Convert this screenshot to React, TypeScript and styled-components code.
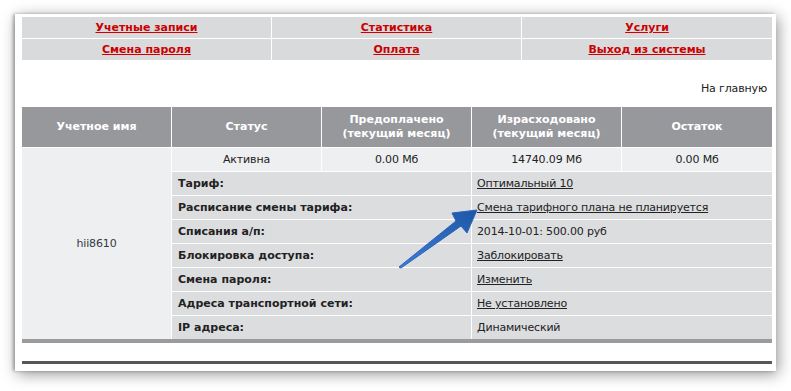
import React from "react";
import styled, { createGlobalStyle } from "styled-components";

const Global = createGlobalStyle`
  html, body { margin: 0; padding: 0; background: #ffffff; }
  body { font-family: "DejaVu Sans", Verdana, sans-serif; font-size: 11px; color: #222; }
`;

const Stage = styled.div`
  position: relative;
  width: 791px;
  height: 391px;
  padding: 14px 0 0 15px;
  box-sizing: border-box;
`;

const Panel = styled.div`
  width: 761px;
  height: 357px;
  box-sizing: border-box;
  background: #fff;
  padding: 3px 4px 0 7px;
  box-shadow: 2px 3px 14px rgba(0, 0, 0, 0.42), -2px 0 3px rgba(0, 0, 0, 0.28);
  display: flex;
  flex-direction: column;
`;

const Nav = styled.div`
  width: 750px;
  display: grid;
  grid-template-columns: 249px 249px 250px;
  grid-auto-rows: 21px;
  gap: 1px;
  background: #fff;
`;

const NavCell = styled.div`
  background: #d9dadc;
  display: flex;
  align-items: center;
  justify-content: center;
`;

const NavLink = styled.a`
  color: #cc0000;
  font-weight: bold;
  font-size: 11px;
  text-decoration: underline;
`;

const HomeRow = styled.div`
  width: 750px;
  margin: 22px 0 11px;
  line-height: 14px;
  height: 14px;
  display: flex;
  justify-content: flex-end;
  padding-right: 5px;
  box-sizing: border-box;
  color: #222;
  letter-spacing: -0.15px;
`;

const Grid = styled.div`
  width: 750px;
  display: grid;
  grid-template-columns: 149px 149px 149px 149px 150px;
  grid-template-rows: 40px repeat(8, 23px);
  gap: 1px;
  background: #fff;
  border-bottom: 4px solid #9a9b9d;
`;

const Head = styled.div`
  background: #97989c;
  color: #fff;
  font-weight: bold;
  line-height: 14px;
  text-align: center;
  display: flex;
  align-items: center;
  justify-content: center;
`;

const UserCell = styled.div`
  grid-row: 2 / span 8;
  background: #eeeff1;
  color: #333a42;
  display: flex;
  align-items: center;
  justify-content: center;
  letter-spacing: -0.15px;
`;

const StatusCell = styled.div`
  background: #eeeff1;
  display: flex;
  align-items: center;
  justify-content: center;
  color: #222;
  letter-spacing: -0.15px;
`;

const Label = styled.div`
  grid-column: 2 / span 2;
  background: #dcdddf;
  font-weight: bold;
  color: #222;
  display: flex;
  align-items: center;
  padding-left: 6px;
`;

const Value = styled.div`
  grid-column: 4 / span 2;
  background: #dcdddf;
  color: #222;
  display: flex;
  align-items: center;
  padding-left: 5px;
  letter-spacing: -0.17px;
`;

const ValueLink = styled.a`
  color: #222;
  text-decoration: underline;
`;

const BottomLine = styled.div`
  width: 750px;
  height: 3px;
  margin-top: 18px;
  background: #55575b;
`;

const ArrowSvg = styled.svg`
  position: absolute;
  left: 0;
  top: 0;
  pointer-events: none;
`;

const rows: { label: string; value: string; link: boolean }[] = [
  { label: "Тариф:", value: "Оптимальный 10", link: true },
  { label: "Расписание смены тарифа:", value: "Смена тарифного плана не планируется", link: true },
  { label: "Списания а/п:", value: "2014-10-01: 500.00 руб", link: false },
  { label: "Блокировка доступа:", value: "Заблокировать", link: true },
  { label: "Смена пароля:", value: "Изменить", link: true },
  { label: "Адреса транспортной сети:", value: "Не установлено", link: true },
  { label: "IP адреса:", value: "Динамический", link: false },
];

const navItems = [
  "Учетные записи",
  "Статистика",
  "Услуги",
  "Смена пароля",
  "Оплата",
  "Выход из системы",
];

export default function App() {
  return (
    <Stage>
      <Global />
      <Panel>
        <Nav>
          {navItems.map((n) => (
            <NavCell key={n}>
              <NavLink href="#">{n}</NavLink>
            </NavCell>
          ))}
        </Nav>
        <HomeRow>На главную</HomeRow>
        <Grid>
          <Head>Учетное имя</Head>
          <Head>Статус</Head>
          <Head>
            Предоплачено
            <br />
            (текущий месяц)
          </Head>
          <Head>
            Израсходовано
            <br />
            (текущий месяц)
          </Head>
          <Head>Остаток</Head>
          <UserCell>hii8610</UserCell>
          <StatusCell>Активна</StatusCell>
          <StatusCell>0.00 Мб</StatusCell>
          <StatusCell>14740.09 Мб</StatusCell>
          <StatusCell>0.00 Мб</StatusCell>
          {rows.map((r) => (
            <React.Fragment key={r.label}>
              <Label>{r.label}</Label>
              <Value>{r.link ? <ValueLink href="#">{r.value}</ValueLink> : r.value}</Value>
            </React.Fragment>
          ))}
        </Grid>
        <BottomLine />
      </Panel>
      <ArrowSvg width="791" height="391" viewBox="0 0 791 391">
        <defs>
          <linearGradient id="ag" x1="0" y1="1" x2="1" y2="0">
            <stop offset="0" stopColor="#3f7fd6" />
            <stop offset="1" stopColor="#1d56a8" />
          </linearGradient>
        </defs>
        <polygon
          points="399,267 456,221 452,213 477,210 467,233 461,226 401,268"
          fill="url(#ag)"
          stroke="#2a62b8"
          strokeWidth="1"
          strokeLinejoin="round"
        />
      </ArrowSvg>
    </Stage>
  );
}
